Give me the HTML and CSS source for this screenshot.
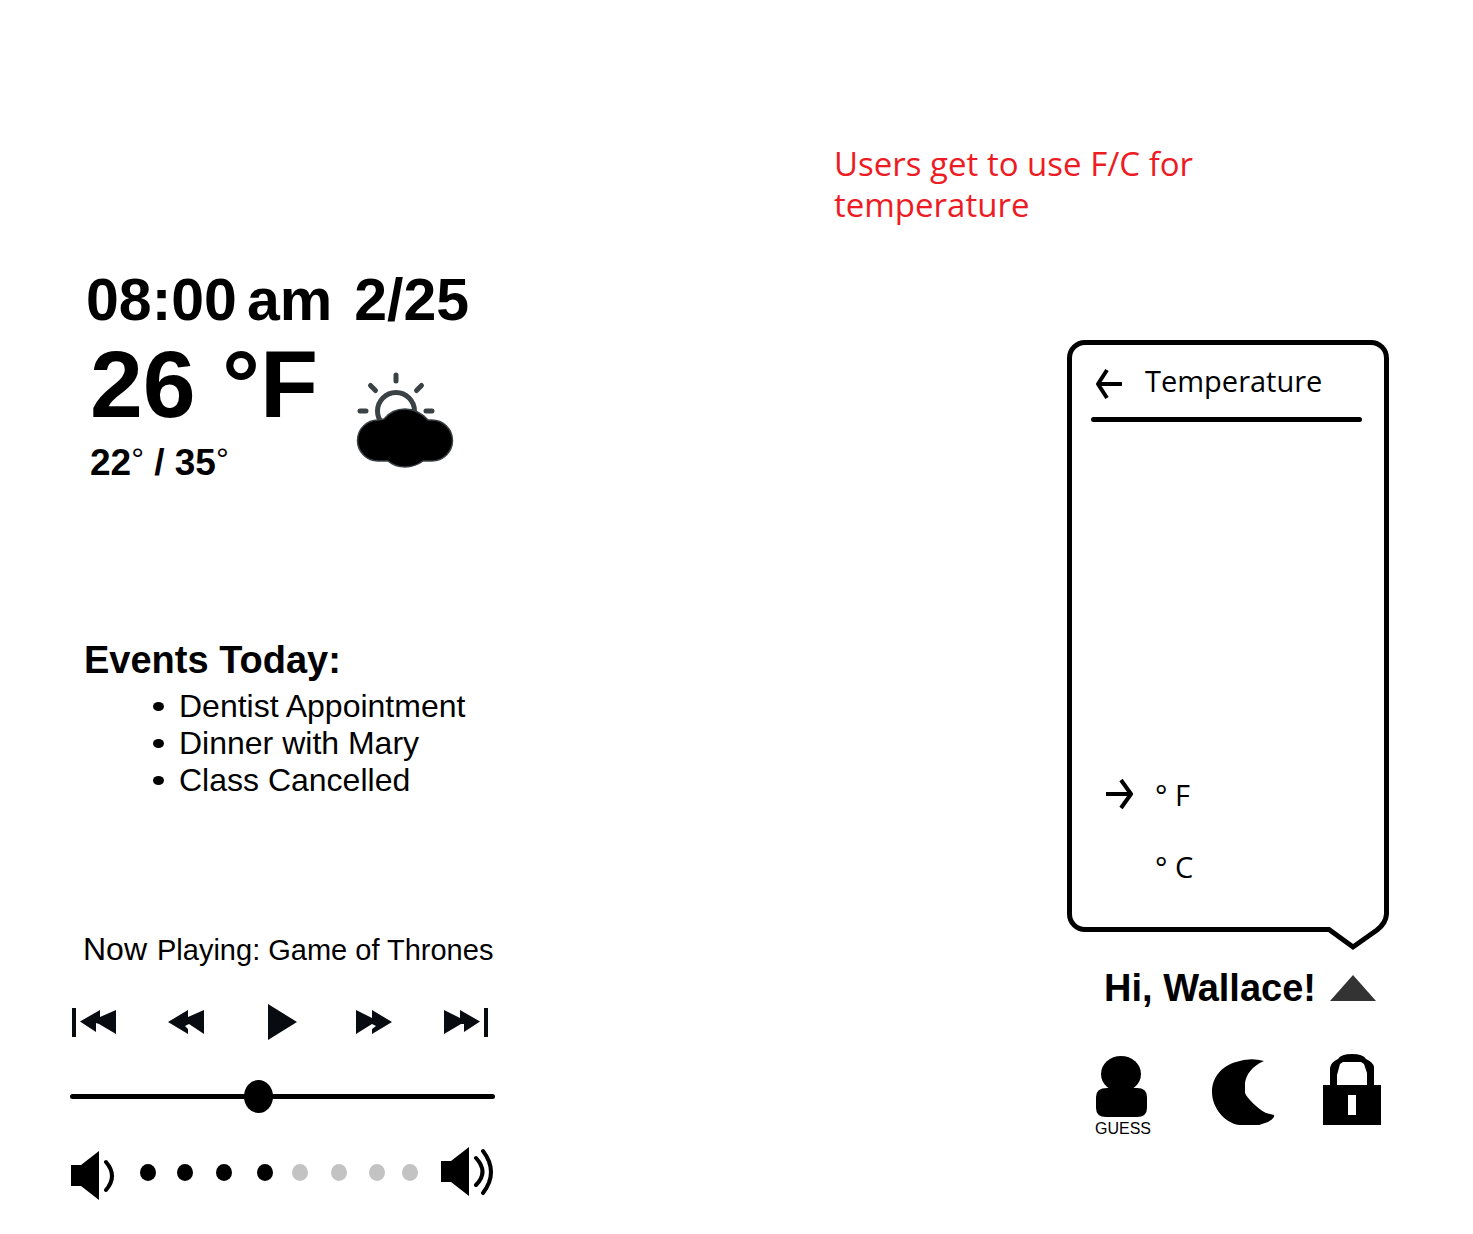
FILE: index.html
```html
<!DOCTYPE html>
<html lang="en">
<head>
<meta charset="utf-8">
<meta name="viewport" content="width=device-width, initial-scale=1">
<title>Lock screen</title>
<link rel="stylesheet" href="styles.css">
</head>
<body>
<main class="screen">
  <div class="widgets">
    <section class="now" aria-label="Time and weather">
      <p class="clock"><span>08:00</span><span>am</span><span class="date">2/25</span></p>
      <div class="weather">
        <div class="readings">
          <p class="current">26 °F</p>
          <p class="low-high">22<span class="deg">°</span> / 35<span class="deg">°</span></p>
        </div>
        <svg class="weather-icon" width="98" height="98" viewBox="0 0 98 98" role="img" aria-label="Partly cloudy">
          <g fill="none" stroke="#3b4245" stroke-width="5" stroke-linecap="round">
            <circle cx="40" cy="41" r="18.5"/>
            <path d="M40 5V11M14.500 15.500L19.500 20.500M65.500 15.500L60.500 20.500M4 41H10M70 41H76"/>
          </g>
          <path fill="#000" stroke="#3b4245" stroke-width="1.500" stroke-linejoin="round" d="M22 50L28 49Q36 39 49 39Q62 39 72 50H76A20.500 20.500 0 0 1 76 91L67 91Q59 97 49 97Q39 97 32 91L22 91A20.500 20.500 0 0 1 22 50Z"/>
        </svg>
      </div>
    </section>

    <section class="events">
      <h2>Events Today:</h2>
      <ul>
        <li>Dentist Appointment</li>
        <li>Dinner with Mary</li>
        <li>Class Cancelled</li>
      </ul>
    </section>

    <section class="player" aria-label="Media player">
      <p class="track"><span class="track-label">Now</span><span>Playing: Game of Thrones</span></p>
      <div class="transport">
        <button type="button" aria-label="Previous"><svg width="46" height="36" viewBox="0 0 46 36"><path d="M0 4H4V33H0ZM8 17.500L28 6V13L44 6V30L27 20L24 19V28Z"/></svg></button>
        <button type="button" aria-label="Rewind"><svg width="46" height="36" viewBox="0 0 46 36"><path d="M3 18L23 6V13L39 6V30L24 20L20 22L23 25V30Z"/></svg></button>
        <button type="button" aria-label="Play"><svg width="46" height="36" viewBox="0 0 46 36"><path d="M10 0L39 18L10 36Z"/></svg></button>
        <button type="button" aria-label="Fast forward"><svg width="46" height="36" viewBox="0 0 46 36"><path d="M6 6L22 14V6L42 18L22 30V25L26 22L22 20L6 30Z"/></svg></button>
        <button type="button" aria-label="Next"><svg width="46" height="36" viewBox="0 0 46 36"><path d="M1 6L17 14V6L37 17.500L21 28V20L18 20L1 30ZM41 4H45V33H41Z"/></svg></button>
      </div>
      <input class="seek" type="range" min="0" max="100" value="44" aria-label="Playback position">
      <div class="volume">
        <button type="button" aria-label="Volume down"><svg width="46" height="54" viewBox="0 0 46 54"><path d="M1 18H11L29 4V53L11 39H1Z"/><path class="wave" d="M36 15Q48 29 36 43"/></svg></button>
        <div class="levels" role="radiogroup" aria-label="Volume">
          <input class="on" type="radio" name="volume" aria-label="1">
          <input class="on" type="radio" name="volume" aria-label="2">
          <input class="on" type="radio" name="volume" aria-label="3">
          <input class="on" type="radio" name="volume" aria-label="4" checked>
          <input type="radio" name="volume" aria-label="5">
          <input type="radio" name="volume" aria-label="6">
          <input type="radio" name="volume" aria-label="7">
          <input type="radio" name="volume" aria-label="8">
        </div>
        <button type="button" aria-label="Volume up"><svg width="54" height="54" viewBox="0 0 54 54"><path d="M0 14H10L28 0V49L10 35H0Z"/><path class="wave" d="M35 11Q48 25 35 38M42 4Q58 25 42 46"/></svg></button>
      </div>
    </section>
  </div>

  <div class="account">
    <p class="note">Users get to use F/C for temperature</p>
    <section class="bubble" aria-labelledby="panel-title">
      <header>
        <button type="button" aria-label="Back"><svg width="28" height="32" viewBox="0 0 28 32"><path class="arrow" d="M27 16H3M12 2L3 16L12 30"/></svg></button>
        <h2 id="panel-title">Temperature</h2>
      </header>
      <div class="options">
        <label><input type="radio" name="unit" checked><svg width="28" height="32" viewBox="0 0 28 32"><path class="arrow" d="M0 15H25M15 1L25 15L15 29"/></svg><span>° F</span></label>
        <label><input type="radio" name="unit"><svg width="28" height="32" viewBox="0 0 28 32"><path class="arrow" d="M0 15H25M15 1L25 15L15 29"/></svg><span>° C</span></label>
      </div>
      <svg class="tail" width="64" height="40" viewBox="0 0 64 40" aria-hidden="true"><path class="tail-mask" d="M3 0H64V40H3Z"/><path class="tail-line" d="M0 18.500H4L28 36L52 19Q61 12 61.500 3V0"/></svg>
    </section>
    <div class="greeting">
      <h1>Hi, Wallace!</h1>
      <button type="button" aria-label="Close settings"><svg width="46" height="26" viewBox="0 0 46 26"><path fill="#333" d="M23 0L46 26H0Z"/></svg></button>
    </div>
    <div class="actions">
      <button class="guest" type="button"><svg width="56" height="64" viewBox="0 0 56 64" aria-hidden="true"><ellipse cx="26" cy="20" rx="20" ry="18"/><path d="M12 34H42Q52 34 52 43V54Q52 63 42 63H11Q1 63 1 54V43Q1 34 12 34Z"/></svg><span>GUESS</span></button>
      <button type="button" aria-label="Sleep"><svg width="80" height="72" viewBox="0 0 80 72"><path d="M67 7Q53 3 39 8C25 12 15 23 15 38C15 54 28 69 42 71H62L71 68Q78 64 77 61L69 59C61 55 50 44 48 39V29C49 21 55 12 67 7Z"/></svg></button>
      <button type="button" aria-label="Lock"><svg width="58" height="72" viewBox="0 0 58 72"><path fill-rule="evenodd" d="M7 31V14Q8 8 15 5Q18 0 29 0Q40 0 43 5Q50 8 51 13V31H58V71H0V31ZM14 31H44V19L41 10L38 8H20L17 10L14 21ZM25 41V61H33V41Z"/></svg></button>
    </div>
  </div>
</main>
</body>
</html>
```
FILE: styles.css
```css
* { box-sizing: border-box; }

body {
  margin: 0;
  background: #fff;
  color: #000;
  font-family: "Liberation Sans", Arial, sans-serif;
}

h1, h2, p, ul { margin: 0; padding: 0; }
svg { display: block; }

button {
  padding: 0;
  border: 0;
  background: none;
  color: inherit;
  font: inherit;
  cursor: pointer;
}

.screen {
  display: flex;
  justify-content: space-between;
  gap: 48px;
  padding: 143px 84px 32px 70px;
}

.widgets { width: 425px; padding-top: 127px; }

/* Time and weather */
.clock {
  display: flex;
  gap: 10px;
  padding-left: 16px;
  font-size: 59px;
  font-weight: 700;
  line-height: 60px;
}
.date { margin-left: 12px; }

.weather {
  display: flex;
  align-items: flex-end;
  gap: 38px;
  margin-top: 6px;
  padding-left: 20px;
  font-weight: 700;
}
.weather-icon { margin-bottom: 14px; }
.current { font-size: 95px; line-height: 96px; white-space: nowrap; }
.low-high { margin-top: 12px; font-size: 37px; line-height: 38px; }
.deg { font-size: 32px; font-weight: 400; line-height: 1px; vertical-align: 5px; }

/* Events */
.events { margin-top: 159px; padding-left: 14px; }
.events h2 { font-size: 38px; line-height: 38px; }
.events ul { margin-top: 9px; list-style: none; }
.events li {
  display: flex;
  align-items: center;
  gap: 15px;
  padding-left: 69px;
  font-size: 32px;
  line-height: 37px;
}
.events li::before {
  content: "";
  width: 11px;
  height: 9px;
  border-radius: 50%;
  background: #000;
}

/* Player */
.player { margin-top: 132px; }
.track {
  display: flex;
  align-items: baseline;
  gap: 10px;
  height: 37px;
  padding-left: 13px;
  font-size: 29px;
  line-height: 37px;
  white-space: nowrap;
}
.track-label { font-size: 32px; }

.transport {
  display: flex;
  justify-content: space-between;
  margin: 36px 6px 0 2px;
}
.transport path { fill: #080b10; }

.seek {
  display: block;
  width: 100%;
  height: 33px;
  margin: 40px 0 0;
  appearance: none;
  background: none;
}
.seek::-webkit-slider-runnable-track { height: 5px; border-radius: 3px; background: #000; }
.seek::-webkit-slider-thumb {
  width: 29px;
  height: 33px;
  margin-top: -14px;
  appearance: none;
  border-radius: 50%;
  background: #000;
}

.volume {
  display: flex;
  align-items: center;
  justify-content: space-between;
  margin-top: 34px;
}
.levels {
  display: grid;
  grid-template-columns: 37px 39px 41px 35px 39px 38px 33px 16px;
  margin-bottom: 3px;
}
.levels input {
  width: 16px;
  height: 17px;
  margin: 0;
  appearance: none;
  border-radius: 50%;
  background: #c3c3c3;
}
.levels .on { background: #000; }
.wave { fill: none; stroke: #000; stroke-width: 4; stroke-linecap: round; }

/* Account column */
.account { display: flex; flex-direction: column; align-items: flex-end; width: 555px; }

.note {
  align-self: flex-start;
  width: 400px;
  color: #ed1c24;
  font: 33px/41px "Open Sans", "Noto Sans", sans-serif;
}

.bubble {
  position: relative;
  display: flex;
  flex-direction: column;
  width: 322px;
  min-height: 592px;
  margin-top: 115px;
  padding: 16px 22px 40px 19px;
  border: 5px solid #000;
  border-radius: 18px;
  font: 29px/40px "Open Sans", "Noto Sans", sans-serif;
}
.bubble header { display: flex; align-items: center; gap: 22px; padding: 0 4px; }
.bubble header button { padding-top: 5px; }
.bubble h2 { font: inherit; }
.options { display: flex; flex: 1; flex-direction: column; gap: 32px; margin-top: 16px; }
.options::before {
  content: "";
  height: 5px;
  margin-bottom: auto;
  border-radius: 3px;
  background: #000;
}
.options label {
  display: grid;
  grid-template-columns: 28px auto;
  align-items: center;
  justify-content: start;
  column-gap: 21px;
  padding-left: 15px;
}
.options input { grid-area: 1 / 1; width: 28px; height: 32px; margin: 0; appearance: none; }
.options svg { grid-area: 1 / 1; visibility: hidden; }
.options input:checked + svg { visibility: visible; }
.arrow { fill: none; stroke: #000; stroke-width: 4; stroke-linejoin: round; }

.tail { position: absolute; right: -5px; bottom: -24px; }
.tail-mask { fill: #fff; }
.tail-line { fill: none; stroke: #000; stroke-width: 5; }

.greeting { display: flex; align-items: center; gap: 14px; margin: 37px 13px 0 0; }
.greeting h1 { font-size: 38px; line-height: 38px; white-space: nowrap; }

.actions {
  display: flex;
  align-items: flex-start;
  justify-content: space-between;
  width: 286px;
  margin: 47px 8px 0 0;
}
.guest { font-size: 16px; line-height: 22px; }
.guest span { display: block; }
```
